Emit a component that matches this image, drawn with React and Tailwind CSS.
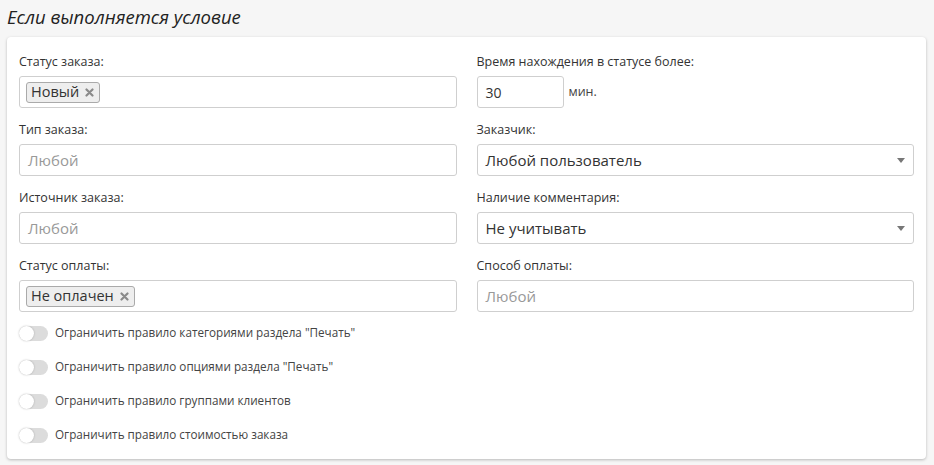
import React from "react";

const font = { fontFamily: '"Open Sans", "Noto Sans", sans-serif' };

function Label({ children }) {
  return <div className="text-[12.5px] leading-[18px] text-[#333] mb-[5px]">{children}</div>;
}

function Chip({ children }) {
  return (
    <span className="inline-flex items-center h-[21px] pl-[4px] pr-[5px] bg-[#eeeeee] border border-[#aaaaaa] rounded-[3px] text-[14.5px] text-[#333]">
      {children}
      <svg className="ml-[6px]" width="9" height="9" viewBox="0 0 9 9">
        <path d="M1.5 1.5 L7.5 7.5 M7.5 1.5 L1.5 7.5" stroke="#8a8a8a" strokeWidth="2.2" strokeLinecap="round" />
      </svg>
    </span>
  );
}

function Box({ children, select, className = "" }) {
  return (
    <div className={"relative h-[32px] border border-[#cfcfcf] rounded-[3px] bg-white flex items-center " + className}>
      {children}
      {select && (
        <svg className="absolute right-[8px] top-[13px]" width="8" height="5" viewBox="0 0 8 5">
          <path d="M0 0 L8 0 L4 5 Z" fill="#777" />
        </svg>
      )}
    </div>
  );
}

function Toggle({ children }) {
  return (
    <div className="flex items-center h-[34px]">
      <div className="relative w-[29px] h-[15px] rounded-full bg-[#dcdcdc]">
        <div className="absolute left-0 top-0 w-[15px] h-[15px] rounded-full bg-white shadow-[0_0_2px_rgba(0,0,0,0.25)]" />
      </div>
      <span className="ml-[7px] text-[11.7px] text-[#444]">{children}</span>
    </div>
  );
}

export default function App() {
  return (
    <div className="w-[934px] h-[465px] bg-[#f6f6f6] pt-[4px] px-[7px]" style={font}>
      <div className="text-[18.5px] italic text-[#222] leading-[26px] ml-[0px]">Если выполняется условие</div>
      <div className="mt-[7px] w-[919px] bg-white rounded-[4px] shadow-[0_1px_3px_rgba(0,0,0,0.25)] pt-[16px] px-[12px] pb-[7px]">
        <div className="grid grid-cols-2 gap-x-[20px]">
          <div>
            <div className="h-[68px]">
              <Label>Статус заказа:</Label>
              <Box className="px-[6px]"><Chip>Новый</Chip></Box>
            </div>
            <div className="h-[68px]">
              <Label>Тип заказа:</Label>
              <Box className="px-[8px]"><span className="text-[15px] text-[#999]">Любой</span></Box>
            </div>
            <div className="h-[68px]">
              <Label>Источник заказа:</Label>
              <Box className="px-[8px]"><span className="text-[15px] text-[#999]">Любой</span></Box>
            </div>
            <div className="h-[52px]">
              <Label>Статус оплаты:</Label>
              <Box className="px-[6px]"><Chip>Не оплачен</Chip></Box>
            </div>
          </div>
          <div>
            <div className="h-[68px]">
              <Label>Время нахождения в статусе более:</Label>
              <div className="flex items-center">
                <Box className="w-[87px] px-[8px]"><span className="text-[14px] text-[#333]">30</span></Box>
                <span className="ml-[5px] text-[12.5px] text-[#444]">мин.</span>
              </div>
            </div>
            <div className="h-[68px]">
              <Label>Заказчик:</Label>
              <Box select className="px-[8px]"><span className="text-[15px] text-[#333]">Любой пользователь</span></Box>
            </div>
            <div className="h-[68px]">
              <Label>Наличие комментария:</Label>
              <Box select className="px-[8px]"><span className="text-[15px] text-[#333]">Не учитывать</span></Box>
            </div>
            <div className="h-[52px]">
              <Label>Способ оплаты:</Label>
              <Box className="px-[8px]"><span className="text-[15px] text-[#999]">Любой</span></Box>
            </div>
          </div>
        </div>
        <div className="mt-[7px]">
          <Toggle>Ограничить правило категориями раздела "Печать"</Toggle>
          <Toggle>Ограничить правило опциями раздела "Печать"</Toggle>
          <Toggle>Ограничить правило группами клиентов</Toggle>
          <Toggle>Ограничить правило стоимостью заказа</Toggle>
        </div>
      </div>
    </div>
  );
}
